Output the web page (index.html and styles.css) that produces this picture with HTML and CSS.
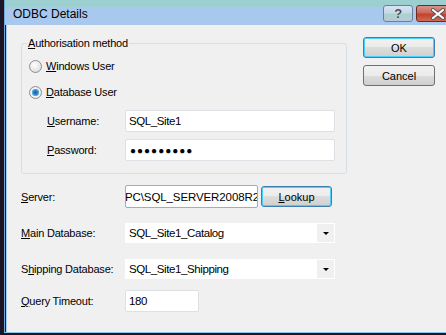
FILE: index.html
```html
<!DOCTYPE html>
<html lang="en">
<head>
  <meta charset="UTF-8">
  <title>ODBC Details</title>
  <link rel="stylesheet" href="styles.css">
</head>
<body>

<div class="window">
  <div class="titlebar">
    <span class="title">ODBC Details</span>
    <div class="caption-btns">
      <div class="cap-btn help">?</div>
      <div class="cap-btn close">
        <svg width="16" height="12" viewBox="0 0 16 12">
          <path d="M3 2 L13 10 M13 2 L3 10" stroke="#555" stroke-width="4" stroke-linecap="round"/>
          <path d="M3 2 L13 10 M13 2 L3 10" stroke="#fff" stroke-width="2.2" stroke-linecap="round"/>
        </svg>
      </div>
    </div>
  </div>

  <div class="content">
    <div class="form">
      <fieldset class="group">
        <legend><u>A</u>uthorisation method</legend>
        <label class="radio-row"><span class="radio"></span><span><u>W</u>indows User</span></label>
        <label class="radio-row"><span class="radio checked"></span><span><u>D</u>atabase User</span></label>
        <div class="field-row indent">
          <span class="lbl"><u>U</u>sername:</span>
          <div class="textbox">SQL_Site1</div>
        </div>
        <div class="field-row indent">
          <span class="lbl"><u>P</u>assword:</span>
          <div class="textbox dots">&#9679;&#9679;&#9679;&#9679;&#9679;&#9679;&#9679;&#9679;&#9679;</div>
        </div>
      </fieldset>

      <div class="field-row server">
        <span class="lbl"><u>S</u>erver:</span>
        <div class="textbox focused"><span class="scrolled">PC\SQL_SERVER2008R2</span></div>
        <button class="btn focus-btn lookup"><u>L</u>ookup</button>
      </div>

      <div class="field-row main-db">
        <span class="lbl"><u>M</u>ain Database:</span>
        <div class="combo">
          <span class="combo-text">SQL_Site1_Catalog</span>
          <span class="combo-arrow"></span>
        </div>
      </div>

      <div class="field-row ship-db">
        <span class="lbl">S<u>h</u>ipping Database:</span>
        <div class="combo">
          <span class="combo-text">SQL_Site1_Shipping</span>
          <span class="combo-arrow"></span>
        </div>
      </div>

      <div class="field-row timeout">
        <span class="lbl"><u>Q</u>uery Timeout:</span>
        <div class="textbox short">180</div>
      </div>
    </div>

    <div class="side">
      <button class="btn focus-btn">OK</button>
      <button class="btn">Cancel</button>
    </div>
  </div>
</div>

</body>
</html>
```

FILE: styles.css
```css
html, body {
  margin: 0;
  padding: 0;
  width: 446px;
  height: 335px;
  overflow: hidden;
  background: #1b1526;
}
body {
  font-family: "Liberation Sans", Arial, sans-serif;
  font-size: 11px;
  letter-spacing: -0.2px;
  color: #000;
}
.window {
  margin-left: 4px;
  height: 332px;
  border-left: 1px solid #6fa9d8;
  border-bottom: 1px solid #8cc4ea;
  background: #f0f0f0;
  box-shadow: inset 1px 0 0 #10202e, inset 2px 0 0 #a9caee;
  overflow: hidden;
}
.titlebar {
  height: 25px;
  background: linear-gradient(#9ccfcf 0, #9ccfcf 7px, #a8c9ed 7px, #a8c9ed 100%);
  display: flex;
  align-items: center;
  justify-content: space-between;
  padding-left: 8px;
}
.title {
  font-size: 12px;
  letter-spacing: 0;
  margin-top: 3px;
}
.caption-btns {
  display: flex;
  gap: 3px;
  margin-right: -14px;
  align-self: flex-start;
  margin-top: 5px;
}
.cap-btn {
  height: 15px;
  border: 1px solid #6d7f93;
  border-radius: 3px;
  display: flex;
  align-items: center;
  justify-content: center;
}
.help {
  width: 28px;
  background: linear-gradient(#d7e4f2 0, #c6d8ec 45%, #a9d4c9 55%, #b8c9dc 100%);
  font-weight: bold;
  font-size: 13px;
  color: #4a4a4a;
  text-shadow: 0 0 1px #fff;
}
.close {
  width: 42px;
  border-color: #6c2b26;
  background: linear-gradient(#d9938a 0, #c9695c 45%, #c2412d 55%, #d06a52 100%);
}
.content {
  display: flex;
  padding: 12px 0 0 16px;
}
.form {
  width: 326px;
}
.group {
  margin: 0;
  padding: 0 11px 12px 5px;
  border: 1px solid #d5dfe5;
  border-radius: 3px;
}
.group legend {
  padding: 0 1px;
  line-height: 13px;
}
.radio-row {
  display: flex;
  align-items: center;
  gap: 4px;
  height: 20px;
  margin-left: 2px;
  margin-top: 6px;
}
.radio {
  width: 11px;
  height: 11px;
  border: 1px solid #8f8f8f;
  border-radius: 50%;
  background: radial-gradient(circle at 40% 35%, #fff 0, #e6e6e6 60%, #cfcfcf 100%);
  box-sizing: content-box;
}
.radio.checked {
  background: radial-gradient(circle, #1f5f8f 0, #2d86c2 2px, #69b6e6 3.5px, #f4f4f4 4px, #dcdcdc 100%);
}
.field-row {
  display: flex;
  align-items: center;
}
.lbl {
  flex: 0 0 104px;
}
.indent {
  padding-left: 20px;
}
.indent .lbl {
  flex: 0 0 78px;
}
.field-row + .field-row {
  margin-top: 7px;
}
.radio-row + .field-row {
  margin-top: 8px;
}
.textbox {
  box-sizing: border-box;
  width: 210px;
  height: 22px;
  border: 1px solid #dde1e6;
  border-radius: 2px;
  background: #fff;
  padding: 0 3px;
  display: flex;
  align-items: center;
  font-size: 11.5px;
  letter-spacing: -0.4px;
  white-space: nowrap;
  overflow: hidden;
}
.dots {
  font-size: 10px;
  letter-spacing: 1px;
  padding-left: 4px;
}
.server {
  margin-top: 11px;
}
.textbox.focused {
  width: 133px;
  height: 23px;
  border-color: #80b5e6;
  justify-content: flex-end;
  padding: 0;
  margin-right: 3px;
}
.scrolled {
  flex-shrink: 0;
  margin-right: -2px;
  letter-spacing: -0.1px;
}
.field-row.main-db {
  margin-top: 15px;
}
.field-row.ship-db {
  margin-top: 16px;
}
.field-row.timeout {
  margin-top: 11px;
}
.combo {
  box-sizing: border-box;
  width: 210px;
  height: 20px;
  border: 1px solid #fff;
  background: #fff;
  display: flex;
  align-items: center;
  justify-content: space-between;
  font-size: 11.5px;
  letter-spacing: -0.4px;
}
.combo-text {
  padding-left: 3px;
}
.combo-arrow {
  width: 17px;
  height: 18px;
  background: #f0f0f0;
  display: flex;
  align-items: center;
  justify-content: center;
}
.combo-arrow::after {
  content: "";
  border-left: 3px solid transparent;
  border-right: 3px solid transparent;
  border-top: 3px solid #000;
  margin-top: 1px;
}
.textbox.short {
  width: 74px;
}
.btn {
  box-sizing: border-box;
  width: 72px;
  height: 21px;
  border: 1px solid #707070;
  border-radius: 3px;
  background: linear-gradient(#f2f2f2 0, #ebebeb 50%, #dddddd 50%, #cfcfcf 100%);
  font-family: "Liberation Sans", Arial, sans-serif;
  font-size: 11px;
  color: #000;
  padding: 0;
}
.focus-btn {
  border-color: #3c7fb1;
  box-shadow: inset 0 0 0 1px #48d1fd;
}
.lookup {
  width: 71px;
  height: 21px;
}
.side {
  display: flex;
  flex-direction: column;
  gap: 7px;
  margin-left: 16px;
  padding-top: 0;
}
```
